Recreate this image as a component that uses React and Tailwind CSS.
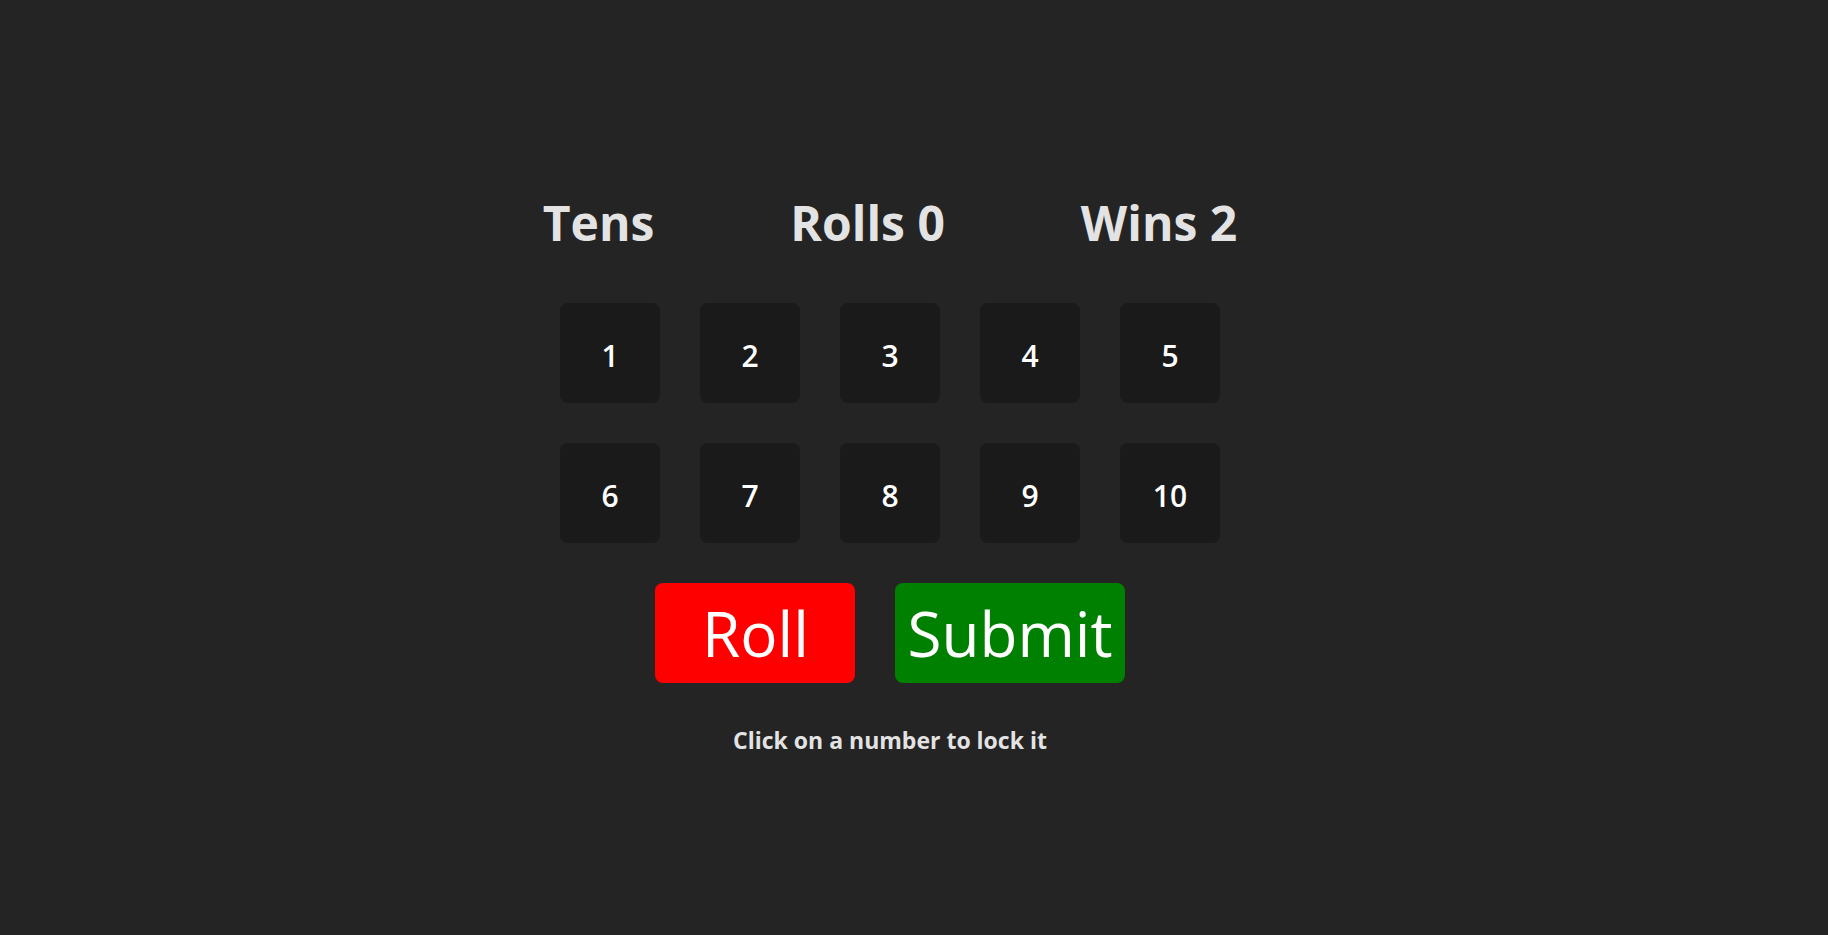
import React, { useState } from 'react';

const FONT = { fontFamily: '"Open Sans", "Noto Sans", sans-serif' };

export default function App() {
  const [dice] = useState([1, 2, 3, 4, 5, 6, 7, 8, 9, 10]);

  return (
    <div className="min-h-screen w-full bg-[#242424] flex justify-center pr-[48px]" style={FONT}>
      <div className="flex flex-col items-center pt-[199px]">
        {/* Title / score row */}
        <div className="flex gap-[136px] text-[48px] font-bold leading-none text-[#e3e3e3]">
          <span>Tens</span>
          <span>Rolls 0</span>
          <span>Wins 2</span>
        </div>

        {/* Dice */}
        <div className="grid grid-cols-5 gap-[40px] mt-[56px]">
          {dice.map(n => (
            <button key={n}
              className="w-[100px] h-[100px] rounded-lg bg-[#1a1a1a] text-white text-[30px] font-semibold flex items-center justify-center pt-1">
              {n}
            </button>
          ))}
        </div>

        {/* Actions */}
        <div className="flex gap-[40px] mt-[40px]">
          <button className="min-w-[200px] h-[100px] px-3 rounded-lg bg-[#ff0000] text-white text-[62px] font-medium">
            Roll
          </button>
          <button className="min-w-[200px] h-[100px] px-3 rounded-lg bg-[#008000] text-white text-[62px] font-medium">
            Submit
          </button>
        </div>

        <p className="mt-[46px] text-[23px] font-bold leading-none text-[#e3e3e3]">
          Click on a number to lock it
        </p>
      </div>
    </div>
  );
}
